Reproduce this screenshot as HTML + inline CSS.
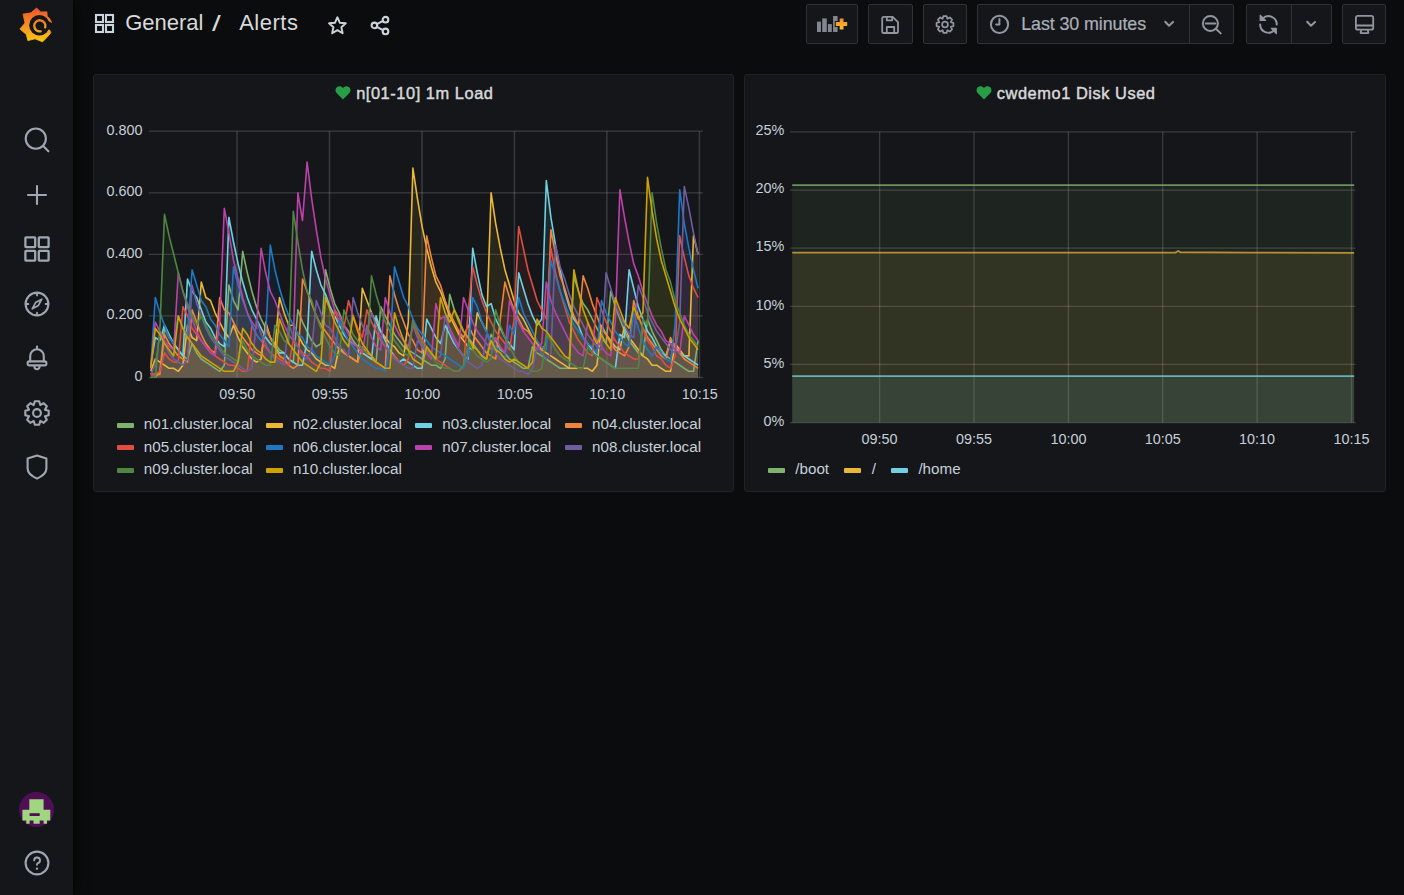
<!DOCTYPE html><html><head><meta charset="utf-8"><style>
html,body{margin:0;padding:0;}
body{width:1404px;height:895px;overflow:hidden;background:#0b0c0e;position:relative;font-family:"Liberation Sans", sans-serif;}
.t{position:absolute;white-space:nowrap;line-height:1;}
#side{position:absolute;left:0;top:0;width:73px;height:895px;background:#141619;box-shadow:0 0 14px rgba(0,0,0,0.9);z-index:0;}
.btn{position:absolute;top:4px;height:38px;background:#141619;border:1px solid #2c3235;border-radius:2px;}
.panel{position:absolute;background:#141619;border:1px solid #202226;border-radius:3px;}
.sw{position:absolute;width:17px;height:5px;border-radius:1px;}
</style></head><body>
<div id="side"><svg style="position:absolute;left:14px;top:2px" width="44" height="46" viewBox="0 0 44 46">
<defs><linearGradient id="lg" gradientUnits="userSpaceOnUse" x1="0" y1="7" x2="0" y2="42"><stop offset="0" stop-color="#f05a28"/><stop offset="0.55" stop-color="#f59a22"/><stop offset="1" stop-color="#fbd00b"/></linearGradient></defs>
<path fill="url(#lg)" stroke="url(#lg)" stroke-width="0.8" stroke-linejoin="round" d="M22.6 5.9 L26.7 10 L32.9 9.8 L33.2 14.2 C35.6 16 37.2 18.6 37.8 21.6 L34.6 22.4 L35.4 27.4 L36.8 30.8 L32.9 35.5 L28.5 39.8 L21 36.8 L13.9 38.6 L12.3 32.4 L5.9 27 L11 21 L9 12.1 L17 10.8 Z"/>
<circle cx="25.4" cy="23.3" r="10.2" fill="#141619"/>
<path fill="#141619" d="M33 18.6 L39 21.4 L39 27.8 L34 27.4 Z"/>
<path fill="none" stroke="url(#lg)" stroke-width="2.3" stroke-linecap="round" d="M26.6 29.4 A5.6 5.6 0 1 1 31.2 25.4"/>
</svg><svg style="position:absolute;left:24.0px;top:127.0px" width="26" height="26" viewBox="0 0 26 26" fill="none" stroke="#9fa7b3" stroke-width="2.1" stroke-linecap="round" stroke-linejoin="round"><circle cx="11.8" cy="11.6" r="10.1"/><path d="M19.2 19 L24.4 24.3"/></svg><svg style="position:absolute;left:24.0px;top:182.0px" width="26" height="26" viewBox="0 0 26 26" fill="none" stroke="#9fa7b3" stroke-width="2.1" stroke-linecap="round" stroke-linejoin="round"><path d="M13 4 V22 M4 13 H22"/></svg><svg style="position:absolute;left:24.0px;top:236.0px" width="26" height="26" viewBox="0 0 26 26" fill="none" stroke="#9fa7b3" stroke-width="2.1" stroke-linecap="round" stroke-linejoin="round"><g stroke-width="2.3"><rect x="1.4" y="1.4" width="9.8" height="9.8" rx="0.6"/><rect x="14.8" y="1.4" width="9.8" height="9.8" rx="0.6"/><rect x="1.4" y="14.8" width="9.8" height="9.8" rx="0.6"/><rect x="14.8" y="14.8" width="9.8" height="9.8" rx="0.6"/></g></svg><svg style="position:absolute;left:24.0px;top:291.0px" width="26" height="26" viewBox="0 0 26 26" fill="none" stroke="#9fa7b3" stroke-width="2.1" stroke-linecap="round" stroke-linejoin="round"><circle cx="13" cy="13" r="11.4"/><path d="M13 2.4 V4.4 M13 21.6 V23.6 M2.4 13 H4.4 M21.6 13 H23.6" stroke-width="1.8"/><path d="M17.8 8.2 L14.4 14.4 L8.2 17.8 L11.6 11.6 Z" stroke-width="1.7"/></svg><svg style="position:absolute;left:24.0px;top:345.0px" width="26" height="26" viewBox="0 0 26 26" fill="none" stroke="#9fa7b3" stroke-width="2.1" stroke-linecap="round" stroke-linejoin="round"><path d="M13 1.6 V3.4"/><path d="M6.2 16.4 V11 A6.8 6.8 0 0 1 19.8 11 V16.4"/><rect x="3.6" y="16.4" width="18.8" height="4" rx="1.6"/><path d="M10.4 21.6 A2.6 2.6 0 0 0 15.6 21.6"/></svg><svg style="position:absolute;left:24.0px;top:400.0px" width="26" height="26" viewBox="0 0 26 26" fill="none" stroke="#9fa7b3" stroke-width="2.1" stroke-linecap="round" stroke-linejoin="round"><path d="M10.77 1.31 L15.23 1.31 L16.29 5.05 L19.69 3.16 L22.84 6.31 L20.95 9.71 L24.69 10.77 L24.69 15.23 L20.95 16.29 L22.84 19.69 L19.69 22.84 L16.29 20.95 L15.23 24.69 L10.77 24.69 L9.71 20.95 L6.31 22.84 L3.16 19.69 L5.05 16.29 L1.31 15.23 L1.31 10.77 L5.05 9.71 L3.16 6.31 L6.31 3.16 L9.71 5.05 Z"/><circle cx="13" cy="13" r="3.9"/></svg><svg style="position:absolute;left:24.0px;top:454.0px" width="26" height="26" viewBox="0 0 26 26" fill="none" stroke="#9fa7b3" stroke-width="2.1" stroke-linecap="round" stroke-linejoin="round"><path d="M13 1.6 L22.4 4.6 V14.6 C22.4 19.4 17.6 22.6 13 24.6 C8.4 22.6 3.6 19.4 3.6 14.6 V4.6 Z"/></svg><svg style="position:absolute;left:19px;top:791.8px" width="35" height="35" viewBox="0 0 35 35">
<circle cx="17.5" cy="17.5" r="17.5" fill="#500e56"/>
<path fill="#a0d680" d="M10.3 7.2 H24.6 V17.8 H31.3 V28.5 H28 V31.8 H24.6 V28.5 H20.7 V31.8 H14.5 V28.5 H10.6 V31.8 H7.3 V28.5 H3.4 V17.8 H10.3 Z"/>
<rect x="10.6" y="21.2" width="10.1" height="2.8" fill="#500e56"/>
</svg><svg style="position:absolute;left:24.0px;top:849.7px" width="26" height="26" viewBox="0 0 26 26" fill="none" stroke="#9fa7b3" stroke-width="2.1" stroke-linecap="round" stroke-linejoin="round"><circle cx="13" cy="13" r="11.4"/><path d="M10.2 10.4 A2.9 2.9 0 1 1 13.8 13.2 C13.2 13.5 13 14 13 14.8" stroke-width="1.9"/><circle cx="13" cy="18.6" r="0.6" fill="#9fa7b3" stroke-width="1.2"/></svg></div>
<svg style="position:absolute;left:94px;top:13px" width="21" height="21" viewBox="0 0 21 21" fill="none" stroke="#ccd3db" stroke-width="2.1">
<rect x="2" y="2" width="7" height="7"/><rect x="12" y="2" width="7" height="7"/><rect x="2" y="12" width="7" height="7"/><rect x="12" y="12" width="7" height="7"/></svg>
<div class="t" style="left:125.20px;top:12.18px;font-size:22px;color:#d8d9da;font-weight:normal;">General</div>
<div class="t" style="left:212.00px;top:12.75px;font-size:22.5px;color:#d8d9da;font-weight:normal;transform:scaleX(1.4);transform-origin:left;">/</div>
<div class="t" style="left:239.20px;top:12.18px;font-size:22px;color:#d8d9da;font-weight:normal;letter-spacing:0.5px;">Alerts</div>
<svg style="position:absolute;left:326px;top:14px" width="23" height="23" viewBox="0 0 23 23" fill="none" stroke="#ccd3db" stroke-width="1.9" stroke-linejoin="round">
<path d="M11.40 3.25 L13.88 8.77 L19.77 9.32 L15.36 13.28 L16.64 19.26 L11.40 16.13 L6.16 19.26 L7.44 13.28 L3.03 9.32 L8.92 8.77 Z"/></svg>
<svg style="position:absolute;left:369px;top:14px" width="23" height="23" viewBox="0 0 23 23" fill="none" stroke="#ccd3db" stroke-width="2.1">
<circle cx="16.5" cy="5.7" r="2.8"/><circle cx="5.4" cy="11.4" r="2.8"/><circle cx="16.5" cy="17.4" r="2.8"/><path d="M7.9 10.1 L14 6.9 M7.9 12.8 L14 16.1"/></svg>
<div class="btn" style="left:806px;width:50px;"></div>
<div class="btn" style="left:868px;width:43px;"></div>
<div class="btn" style="left:923px;width:42px;"></div>
<div class="btn" style="left:977px;width:211px;border-top-right-radius:0;border-bottom-right-radius:0;"></div>
<div class="btn" style="left:1189px;width:43px;border-top-left-radius:0;border-bottom-left-radius:0;"></div>
<div class="btn" style="left:1246px;width:44px;border-top-right-radius:0;border-bottom-right-radius:0;"></div>
<div class="btn" style="left:1291px;width:39px;border-top-left-radius:0;border-bottom-left-radius:0;"></div>
<div class="btn" style="left:1342px;width:42px;"></div>
<svg style="position:absolute;left:812px;top:8px" width="40" height="32" viewBox="812 8 40 32">
<defs><linearGradient id="pg" gradientUnits="userSpaceOnUse" x1="0" y1="18" x2="0" y2="30"><stop offset="0" stop-color="#f5873a"/><stop offset="1" stop-color="#f7c51c"/></linearGradient></defs>
<g fill="#82868d"><rect x="817" y="21.6" width="3.9" height="10.4"/><rect x="822.2" y="18.4" width="4.6" height="13.6"/><rect x="827.9" y="24.1" width="3.9" height="7.9"/><rect x="833.1" y="16" width="4.5" height="16"/></g>
<path fill="#141619" d="M838.7 17.4 H844.5 V21 H848.2 V26.9 H844.5 V30.5 H838.7 V26.9 H834.8 V21 H838.7 Z"/>
<path fill="url(#pg)" d="M839.7 18.4 H843.5 V22 H847.2 V25.9 H843.5 V29.5 H839.7 V25.9 H835.8 V22 H839.7 Z"/>
</svg>
<svg style="position:absolute;left:876px;top:8px" width="32" height="32" viewBox="0 0 32 32" fill="none" stroke="#92979f" stroke-width="1.8" stroke-linecap="round" stroke-linejoin="round"><path d="M7.8 8.8 H16.6 L22 14.2 V23.4 A1.6 1.6 0 0 1 20.4 25 H7.8 A1.6 1.6 0 0 1 6.2 23.4 V10.4 A1.6 1.6 0 0 1 7.8 8.8 Z"/><path d="M10.8 9 V12.4 H16.2 V9"/><path d="M10.8 24.8 V19 H18.2 V24.8"/></svg>
<svg style="position:absolute;left:929px;top:8px" width="32" height="32" viewBox="0 0 32 32" fill="none" stroke="#92979f" stroke-width="1.7" stroke-linecap="round" stroke-linejoin="round"><path d="M14.39 8.05 L17.61 8.05 L18.37 10.77 L20.83 9.39 L23.11 11.67 L21.73 14.13 L24.45 14.89 L24.45 18.11 L21.73 18.87 L23.11 21.33 L20.83 23.61 L18.37 22.23 L17.61 24.95 L14.39 24.95 L13.63 22.23 L11.17 23.61 L8.89 21.33 L10.27 18.87 L7.55 18.11 L7.55 14.89 L10.27 14.13 L8.89 11.67 L11.17 9.39 L13.63 10.77 Z"/><circle cx="16" cy="16.5" r="2.9"/></svg>
<svg style="position:absolute;left:984px;top:8px" width="32" height="32" viewBox="0 0 32 32" fill="none" stroke="#92979f" stroke-width="2" stroke-linecap="round" stroke-linejoin="round"><circle cx="15.5" cy="16.4" r="8.6"/><path d="M15.4 11.1 V16.6 H12.2"/></svg>
<div class="t" style="left:1021.20px;top:16.15px;font-size:17.9px;color:#aab0b8;font-weight:normal;letter-spacing:-0.1px;-webkit-text-stroke:0.2px #aab0b8;">Last 30 minutes</div>
<svg style="position:absolute;left:1155px;top:12px" width="25" height="24" viewBox="0 0 25 24" fill="none" stroke="#92979f" stroke-width="2" stroke-linecap="round" stroke-linejoin="round"><path d="M10.2 9.7 L14 13.7 L18 9.9"/></svg>
<svg style="position:absolute;left:1196px;top:8px" width="32" height="32" viewBox="0 0 32 32" fill="none" stroke="#92979f" stroke-width="2" stroke-linecap="round" stroke-linejoin="round"><circle cx="14.4" cy="15.4" r="7.5"/><path d="M9.8 15.6 H19.3 M20.7 21.5 L24.7 25.4"/></svg>
<svg style="position:absolute;left:1252px;top:8px" width="32" height="32" viewBox="0 0 32 32" fill="none" stroke="#92979f" stroke-width="2" stroke-linecap="round" stroke-linejoin="round"><path d="M10.6 10.6 A8.3 8.3 0 0 1 24.75 16.6"/><path d="M8.15 16.45 A8.3 8.3 0 0 0 22.3 22.3"/><path d="M8.2 7.2 V12.5 H13.6 Z M24.3 25.7 V20.4 H19.3 Z" fill="#92979f" stroke-width="1.2"/></svg>
<svg style="position:absolute;left:1297.4px;top:12px" width="25" height="24" viewBox="0 0 25 24" fill="none" stroke="#92979f" stroke-width="2" stroke-linecap="round" stroke-linejoin="round"><path d="M10.2 9.7 L14 13.7 L18 9.9"/></svg>
<svg style="position:absolute;left:1346px;top:8px" width="36" height="32" viewBox="0 0 36 32" fill="none" stroke="#92979f" stroke-width="1.8" stroke-linecap="round" stroke-linejoin="round"><rect x="9.9" y="7.8" width="17.3" height="13.9" rx="2"/><path d="M10 17.5 H27"/><path d="M15.4 21.8 L14.6 24.6 A0.6 0.6 0 0 0 15.2 25.2 H21.8 A0.6 0.6 0 0 0 22.4 24.6 L21.6 21.8"/></svg>
<div class="panel" style="left:93px;top:74px;width:639px;height:416px"></div>
<div class="panel" style="left:744px;top:74px;width:640px;height:416px"></div>
<svg style="position:absolute;left:334.8px;top:85.8px" width="16" height="14" viewBox="0 0 16 14"><path fill="#299c46" d="M8 13.4 L1.6 7 C0.1 5.4 0.1 2.8 1.8 1.2 C3.6 -0.3 6.4 0.1 8 2.1 C9.6 0.1 12.4 -0.3 14.2 1.2 C15.9 2.8 15.9 5.4 14.4 7 Z"/></svg>
<div class="t" style="left:356.20px;top:84.72px;font-size:16.4px;color:#d8d9da;font-weight:normal;letter-spacing:0.55px;-webkit-text-stroke:0.45px #d8d9da;">n[01-10] 1m Load</div>
<svg style="position:absolute;left:975.6px;top:85.8px" width="16" height="14" viewBox="0 0 16 14"><path fill="#299c46" d="M8 13.4 L1.6 7 C0.1 5.4 0.1 2.8 1.8 1.2 C3.6 -0.3 6.4 0.1 8 2.1 C9.6 0.1 12.4 -0.3 14.2 1.2 C15.9 2.8 15.9 5.4 14.4 7 Z"/></svg>
<div class="t" style="left:996.80px;top:84.72px;font-size:16.4px;color:#d8d9da;font-weight:normal;letter-spacing:0.55px;-webkit-text-stroke:0.45px #d8d9da;">cwdemo1 Disk Used</div>
<svg style="position:absolute;left:0;top:0" width="1404" height="895">
<line x1="148.8" x2="703" y1="377.50" y2="377.50" stroke="rgba(255,255,255,0.155)" stroke-width="1.3"/>
<line x1="148.8" x2="703" y1="315.93" y2="315.93" stroke="rgba(255,255,255,0.155)" stroke-width="1.3"/>
<line x1="148.8" x2="703" y1="254.35" y2="254.35" stroke="rgba(255,255,255,0.155)" stroke-width="1.3"/>
<line x1="148.8" x2="703" y1="192.78" y2="192.78" stroke="rgba(255,255,255,0.155)" stroke-width="1.3"/>
<line x1="148.8" x2="703" y1="131.20" y2="131.20" stroke="rgba(255,255,255,0.155)" stroke-width="1.3"/>
<line x1="237.0" x2="237.0" y1="131.2" y2="377.5" stroke="rgba(255,255,255,0.155)" stroke-width="1.5"/>
<line x1="329.5" x2="329.5" y1="131.2" y2="377.5" stroke="rgba(255,255,255,0.155)" stroke-width="1.5"/>
<line x1="422.0" x2="422.0" y1="131.2" y2="377.5" stroke="rgba(255,255,255,0.155)" stroke-width="1.5"/>
<line x1="514.4" x2="514.4" y1="131.2" y2="377.5" stroke="rgba(255,255,255,0.155)" stroke-width="1.5"/>
<line x1="606.9" x2="606.9" y1="131.2" y2="377.5" stroke="rgba(255,255,255,0.155)" stroke-width="1.5"/>
<line x1="699.4" x2="699.4" y1="131.2" y2="377.5" stroke="rgba(255,255,255,0.155)" stroke-width="1.5"/>
<defs><clipPath id="c1"><rect x="150" y="120" width="552" height="258"/></clipPath></defs><g clip-path="url(#c1)">
<polygon points="150.7,377.5 150.7,377.5 155.3,377.5 159.9,371.3 164.5,328.2 169.1,337.5 173.7,343.6 178.3,349.8 182.9,355.9 187.5,359.0 192.1,343.6 196.7,352.9 201.3,359.0 205.9,362.1 210.5,365.2 215.1,368.3 219.7,371.3 224.3,365.2 228.9,285.1 233.5,300.5 238.1,309.8 242.7,251.3 247.3,272.8 251.9,291.3 256.5,306.7 261.1,319.0 265.7,328.2 270.3,337.5 274.9,343.6 279.5,349.8 284.1,352.9 288.7,359.0 293.3,362.1 297.9,309.8 302.5,322.1 307.1,331.3 311.7,340.6 316.3,346.7 320.9,343.6 325.5,269.7 330.1,288.2 334.7,303.6 339.3,312.8 343.9,325.2 348.5,331.3 353.1,340.6 357.7,346.7 362.3,352.9 366.9,355.9 371.5,359.0 376.1,362.1 380.7,306.7 385.3,315.9 389.9,325.2 394.5,334.4 399.1,340.6 403.7,346.7 408.3,349.8 412.9,352.9 417.5,355.9 422.1,359.0 426.7,362.1 431.3,365.2 435.9,365.2 440.5,368.3 445.1,359.0 449.7,294.4 454.3,309.8 458.9,319.0 463.5,331.3 468.1,337.5 472.7,343.6 477.3,349.8 481.9,355.9 486.5,359.0 491.1,334.4 495.7,340.6 500.3,349.8 504.9,352.9 509.5,359.0 514.1,362.1 518.7,365.2 523.3,368.3 527.9,368.3 532.5,346.7 537.1,352.9 541.7,355.9 546.3,359.0 550.9,362.1 555.5,365.2 560.1,368.3 564.7,368.3 569.3,368.3 573.9,275.9 578.5,291.3 583.1,303.6 587.7,309.8 592.3,319.0 596.9,328.2 601.5,337.5 606.1,343.6 610.7,291.3 615.3,306.7 619.9,319.0 624.5,331.3 629.1,340.6 633.7,346.7 638.3,352.9 642.9,355.9 647.5,319.0 652.1,331.3 656.7,340.6 661.3,349.8 665.9,355.9 670.5,359.0 675.1,362.1 679.7,365.2 684.3,368.3 688.9,371.3 693.5,371.3 698.1,340.6 698.1,377.5" fill="#7EB26D" fill-opacity="0.1"/>
<polygon points="150.7,377.5 150.7,371.3 155.3,359.0 159.9,362.1 164.5,365.2 169.1,368.3 173.7,368.3 178.3,371.3 182.9,365.2 187.5,325.2 192.1,337.5 196.7,340.6 201.3,282.1 205.9,297.5 210.5,300.5 215.1,312.8 219.7,322.1 224.3,331.3 228.9,337.5 233.5,325.2 238.1,337.5 242.7,346.7 247.3,352.9 251.9,359.0 256.5,362.1 261.1,359.0 265.7,322.1 270.3,337.5 274.9,346.7 279.5,297.5 284.1,312.8 288.7,325.2 293.3,325.2 297.9,334.4 302.5,343.6 307.1,349.8 311.7,352.9 316.3,359.0 320.9,362.1 325.5,365.2 330.1,365.2 334.7,368.3 339.3,346.7 343.9,352.9 348.5,355.9 353.1,359.0 357.7,362.1 362.3,288.2 366.9,300.5 371.5,312.8 376.1,322.1 380.7,331.3 385.3,337.5 389.9,343.6 394.5,346.7 399.1,352.9 403.7,355.9 408.3,322.1 412.9,168.1 417.5,198.9 422.1,226.6 426.7,248.2 431.3,266.7 435.9,282.1 440.5,291.3 445.1,303.6 449.7,315.9 454.3,325.2 458.9,334.4 463.5,340.6 468.1,346.7 472.7,349.8 477.3,312.8 481.9,322.1 486.5,331.3 491.1,192.8 495.7,223.6 500.3,248.2 504.9,269.7 509.5,285.1 514.1,300.5 518.7,312.8 523.3,319.0 527.9,328.2 532.5,337.5 537.1,343.6 541.7,349.8 546.3,352.9 550.9,355.9 555.5,359.0 560.1,362.1 564.7,365.2 569.3,368.3 573.9,368.3 578.5,368.3 583.1,368.3 587.7,368.3 592.3,371.3 596.9,365.2 601.5,325.2 606.1,334.4 610.7,340.6 615.3,346.7 619.9,349.8 624.5,325.2 629.1,337.5 633.7,343.6 638.3,349.8 642.9,355.9 647.5,359.0 652.1,365.2 656.7,365.2 661.3,368.3 665.9,371.3 670.5,371.3 675.1,343.6 679.7,349.8 684.3,355.9 688.9,355.9 693.5,235.9 698.1,254.3 698.1,377.5" fill="#EAB839" fill-opacity="0.1"/>
<polygon points="150.7,377.5 150.7,365.2 155.3,337.5 159.9,340.6 164.5,325.2 169.1,334.4 173.7,343.6 178.3,349.8 182.9,355.9 187.5,279.0 192.1,291.3 196.7,297.5 201.3,309.8 205.9,322.1 210.5,328.2 215.1,337.5 219.7,343.6 224.3,346.7 228.9,217.4 233.5,242.0 238.1,263.6 242.7,282.1 247.3,297.5 251.9,309.8 256.5,319.0 261.1,328.2 265.7,337.5 270.3,343.6 274.9,346.7 279.5,352.9 284.1,352.9 288.7,359.0 293.3,362.1 297.9,365.2 302.5,365.2 307.1,340.6 311.7,251.3 316.3,269.7 320.9,285.1 325.5,294.4 330.1,306.7 334.7,315.9 339.3,325.2 343.9,334.4 348.5,340.6 353.1,343.6 357.7,346.7 362.3,352.9 366.9,355.9 371.5,359.0 376.1,315.9 380.7,331.3 385.3,340.6 389.9,349.8 394.5,355.9 399.1,362.1 403.7,359.0 408.3,362.1 412.9,365.2 417.5,368.3 422.1,368.3 426.7,319.0 431.3,328.2 435.9,337.5 440.5,343.6 445.1,325.2 449.7,334.4 454.3,343.6 458.9,349.8 463.5,355.9 468.1,359.0 472.7,248.2 477.3,272.8 481.9,294.4 486.5,306.7 491.1,303.6 495.7,319.0 500.3,328.2 504.9,337.5 509.5,343.6 514.1,349.8 518.7,272.8 523.3,288.2 527.9,303.6 532.5,315.9 537.1,325.2 541.7,319.0 546.3,180.5 550.9,217.4 555.5,245.1 560.1,269.7 564.7,291.3 569.3,306.7 573.9,319.0 578.5,325.2 583.1,337.5 587.7,343.6 592.3,349.8 596.9,355.9 601.5,359.0 606.1,362.1 610.7,365.2 615.3,368.3 619.9,334.4 624.5,337.5 629.1,269.7 633.7,288.2 638.3,306.7 642.9,319.0 647.5,331.3 652.1,337.5 656.7,346.7 661.3,352.9 665.9,355.9 670.5,340.6 675.1,346.7 679.7,352.9 684.3,355.9 688.9,359.0 693.5,362.1 698.1,365.2 698.1,377.5" fill="#6ED0E0" fill-opacity="0.1"/>
<polygon points="150.7,377.5 150.7,374.4 155.3,374.4 159.9,374.4 164.5,334.4 169.1,343.6 173.7,349.8 178.3,355.9 182.9,359.0 187.5,362.1 192.1,309.8 196.7,322.1 201.3,334.4 205.9,343.6 210.5,349.8 215.1,352.9 219.7,297.5 224.3,309.8 228.9,312.8 233.5,322.1 238.1,331.3 242.7,337.5 247.3,343.6 251.9,349.8 256.5,352.9 261.1,355.9 265.7,325.2 270.3,337.5 274.9,346.7 279.5,355.9 284.1,359.0 288.7,365.2 293.3,368.3 297.9,365.2 302.5,279.0 307.1,291.3 311.7,303.6 316.3,315.9 320.9,325.2 325.5,331.3 330.1,337.5 334.7,343.6 339.3,349.8 343.9,352.9 348.5,355.9 353.1,359.0 357.7,362.1 362.3,346.7 366.9,352.9 371.5,355.9 376.1,362.1 380.7,365.2 385.3,368.3 389.9,275.9 394.5,294.4 399.1,309.8 403.7,322.1 408.3,334.4 412.9,340.6 417.5,349.8 422.1,352.9 426.7,235.9 431.3,257.4 435.9,275.9 440.5,285.1 445.1,300.5 449.7,312.8 454.3,322.1 458.9,331.3 463.5,337.5 468.1,325.2 472.7,334.4 477.3,340.6 481.9,346.7 486.5,352.9 491.1,355.9 495.7,359.0 500.3,319.0 504.9,282.1 509.5,297.5 514.1,309.8 518.7,319.0 523.3,328.2 527.9,331.3 532.5,337.5 537.1,343.6 541.7,349.8 546.3,343.6 550.9,229.7 555.5,254.3 560.1,275.9 564.7,288.2 569.3,303.6 573.9,315.9 578.5,325.2 583.1,275.9 587.7,288.2 592.3,303.6 596.9,315.9 601.5,328.2 606.1,334.4 610.7,343.6 615.3,349.8 619.9,352.9 624.5,355.9 629.1,346.7 633.7,300.5 638.3,315.9 642.9,328.2 647.5,337.5 652.1,343.6 656.7,349.8 661.3,355.9 665.9,359.0 670.5,337.5 675.1,346.7 679.7,352.9 684.3,359.0 688.9,362.1 693.5,365.2 698.1,368.3 698.1,377.5" fill="#EF843C" fill-opacity="0.1"/>
<polygon points="150.7,377.5 150.7,374.4 155.3,374.4 159.9,371.3 164.5,352.9 169.1,359.0 173.7,362.1 178.3,362.1 182.9,306.7 187.5,315.9 192.1,328.2 196.7,334.4 201.3,340.6 205.9,346.7 210.5,349.8 215.1,355.9 219.7,359.0 224.3,362.1 228.9,365.2 233.5,365.2 238.1,368.3 242.7,371.3 247.3,371.3 251.9,325.2 256.5,334.4 261.1,340.6 265.7,346.7 270.3,352.9 274.9,355.9 279.5,359.0 284.1,362.1 288.7,365.2 293.3,340.6 297.9,346.7 302.5,352.9 307.1,355.9 311.7,362.1 316.3,365.2 320.9,368.3 325.5,368.3 330.1,371.3 334.7,309.8 339.3,322.1 343.9,328.2 348.5,300.5 353.1,315.9 357.7,328.2 362.3,337.5 366.9,309.8 371.5,322.1 376.1,331.3 380.7,340.6 385.3,346.7 389.9,352.9 394.5,355.9 399.1,362.1 403.7,365.2 408.3,359.0 412.9,319.0 417.5,331.3 422.1,340.6 426.7,346.7 431.3,352.9 435.9,359.0 440.5,362.1 445.1,365.2 449.7,368.3 454.3,371.3 458.9,371.3 463.5,365.2 468.1,312.8 472.7,266.7 477.3,285.1 481.9,300.5 486.5,312.8 491.1,322.1 495.7,331.3 500.3,337.5 504.9,343.6 509.5,349.8 514.1,319.0 518.7,226.6 523.3,248.2 527.9,269.7 532.5,285.1 537.1,300.5 541.7,309.8 546.3,319.0 550.9,248.2 555.5,272.8 560.1,291.3 564.7,306.7 569.3,322.1 573.9,331.3 578.5,340.6 583.1,346.7 587.7,352.9 592.3,355.9 596.9,297.5 601.5,309.8 606.1,322.1 610.7,331.3 615.3,340.6 619.9,346.7 624.5,352.9 629.1,355.9 633.7,359.0 638.3,359.0 642.9,328.2 647.5,340.6 652.1,346.7 656.7,355.9 661.3,359.0 665.9,365.2 670.5,368.3 675.1,355.9 679.7,235.9 684.3,257.4 688.9,275.9 693.5,288.2 698.1,297.5 698.1,377.5" fill="#E24D42" fill-opacity="0.1"/>
<polygon points="150.7,377.5 150.7,368.3 155.3,297.5 159.9,312.8 164.5,325.2 169.1,337.5 173.7,343.6 178.3,315.9 182.9,328.2 187.5,334.4 192.1,269.7 196.7,285.1 201.3,300.5 205.9,306.7 210.5,319.0 215.1,325.2 219.7,334.4 224.3,340.6 228.9,346.7 233.5,266.7 238.1,285.1 242.7,300.5 247.3,312.8 251.9,325.2 256.5,334.4 261.1,340.6 265.7,334.4 270.3,245.1 274.9,269.7 279.5,288.2 284.1,303.6 288.7,315.9 293.3,325.2 297.9,334.4 302.5,337.5 307.1,346.7 311.7,349.8 316.3,355.9 320.9,359.0 325.5,362.1 330.1,365.2 334.7,355.9 339.3,319.0 343.9,331.3 348.5,340.6 353.1,346.7 357.7,352.9 362.3,359.0 366.9,362.1 371.5,365.2 376.1,368.3 380.7,368.3 385.3,371.3 389.9,346.7 394.5,266.7 399.1,282.1 403.7,297.5 408.3,306.7 412.9,319.0 417.5,328.2 422.1,334.4 426.7,340.6 431.3,346.7 435.9,349.8 440.5,352.9 445.1,355.9 449.7,359.0 454.3,362.1 458.9,365.2 463.5,368.3 468.1,355.9 472.7,297.5 477.3,306.7 481.9,322.1 486.5,331.3 491.1,340.6 495.7,346.7 500.3,352.9 504.9,359.0 509.5,325.2 514.1,334.4 518.7,297.5 523.3,312.8 527.9,322.1 532.5,331.3 537.1,340.6 541.7,346.7 546.3,349.8 550.9,260.5 555.5,275.9 560.1,291.3 564.7,303.6 569.3,315.9 573.9,325.2 578.5,331.3 583.1,337.5 587.7,343.6 592.3,346.7 596.9,352.9 601.5,300.5 606.1,312.8 610.7,322.1 615.3,331.3 619.9,337.5 624.5,343.6 629.1,346.7 633.7,312.8 638.3,328.2 642.9,340.6 647.5,349.8 652.1,355.9 656.7,346.7 661.3,352.9 665.9,359.0 670.5,362.1 675.1,325.2 679.7,189.7 684.3,223.6 688.9,248.2 693.5,269.7 698.1,288.2 698.1,377.5" fill="#1F78C1" fill-opacity="0.1"/>
<polygon points="150.7,377.5 150.7,368.3 155.3,322.1 159.9,331.3 164.5,340.6 169.1,346.7 173.7,349.8 178.3,272.8 182.9,291.3 187.5,306.7 192.1,319.0 196.7,331.3 201.3,340.6 205.9,346.7 210.5,352.9 215.1,355.9 219.7,322.1 224.3,208.2 228.9,232.8 233.5,260.5 238.1,279.0 242.7,297.5 247.3,312.8 251.9,322.1 256.5,328.2 261.1,248.2 265.7,272.8 270.3,291.3 274.9,300.5 279.5,312.8 284.1,325.2 288.7,334.4 293.3,340.6 297.9,192.8 302.5,220.5 307.1,162.0 311.7,198.9 316.3,229.7 320.9,257.4 325.5,279.0 330.1,294.4 334.7,309.8 339.3,315.9 343.9,325.2 348.5,334.4 353.1,343.6 357.7,346.7 362.3,352.9 366.9,325.2 371.5,337.5 376.1,346.7 380.7,349.8 385.3,297.5 389.9,312.8 394.5,325.2 399.1,334.4 403.7,340.6 408.3,346.7 412.9,325.2 417.5,337.5 422.1,346.7 426.7,352.9 431.3,359.0 435.9,303.6 440.5,319.0 445.1,315.9 449.7,328.2 454.3,337.5 458.9,346.7 463.5,297.5 468.1,309.8 472.7,322.1 477.3,331.3 481.9,337.5 486.5,343.6 491.1,349.8 495.7,337.5 500.3,346.7 504.9,352.9 509.5,300.5 514.1,312.8 518.7,322.1 523.3,331.3 527.9,337.5 532.5,343.6 537.1,349.8 541.7,343.6 546.3,282.1 550.9,300.5 555.5,312.8 560.1,322.1 564.7,331.3 569.3,340.6 573.9,346.7 578.5,352.9 583.1,355.9 587.7,322.1 592.3,331.3 596.9,340.6 601.5,346.7 606.1,352.9 610.7,355.9 615.3,322.1 619.9,189.7 624.5,217.4 629.1,242.0 633.7,263.6 638.3,275.9 642.9,291.3 647.5,303.6 652.1,315.9 656.7,325.2 661.3,331.3 665.9,340.6 670.5,343.6 675.1,349.8 679.7,352.9 684.3,315.9 688.9,325.2 693.5,334.4 698.1,340.6 698.1,377.5" fill="#BA43A9" fill-opacity="0.1"/>
<polygon points="150.7,377.5 150.7,374.4 155.3,365.2 159.9,334.4 164.5,343.6 169.1,352.9 173.7,359.0 178.3,362.1 182.9,365.2 187.5,359.0 192.1,285.1 196.7,303.6 201.3,315.9 205.9,328.2 210.5,337.5 215.1,343.6 219.7,349.8 224.3,355.9 228.9,359.0 233.5,362.1 238.1,365.2 242.7,368.3 247.3,371.3 251.9,368.3 256.5,319.0 261.1,334.4 265.7,343.6 270.3,352.9 274.9,359.0 279.5,362.1 284.1,365.2 288.7,322.1 293.3,337.5 297.9,346.7 302.5,355.9 307.1,359.0 311.7,349.8 316.3,300.5 320.9,312.8 325.5,325.2 330.1,328.2 334.7,337.5 339.3,346.7 343.9,349.8 348.5,355.9 353.1,297.5 357.7,312.8 362.3,325.2 366.9,334.4 371.5,312.8 376.1,325.2 380.7,337.5 385.3,346.7 389.9,352.9 394.5,359.0 399.1,362.1 403.7,365.2 408.3,368.3 412.9,368.3 417.5,340.6 422.1,346.7 426.7,349.8 431.3,355.9 435.9,359.0 440.5,355.9 445.1,315.9 449.7,331.3 454.3,340.6 458.9,349.8 463.5,355.9 468.1,362.1 472.7,365.2 477.3,368.3 481.9,365.2 486.5,334.4 491.1,343.6 495.7,352.9 500.3,359.0 504.9,362.1 509.5,365.2 514.1,368.3 518.7,371.3 523.3,371.3 527.9,374.4 532.5,368.3 537.1,346.7 541.7,352.9 546.3,359.0 550.9,352.9 555.5,245.1 560.1,266.7 564.7,279.0 569.3,294.4 573.9,306.7 578.5,315.9 583.1,325.2 587.7,334.4 592.3,340.6 596.9,346.7 601.5,349.8 606.1,272.8 610.7,288.2 615.3,303.6 619.9,315.9 624.5,325.2 629.1,334.4 633.7,337.5 638.3,285.1 642.9,297.5 647.5,312.8 652.1,322.1 656.7,331.3 661.3,337.5 665.9,343.6 670.5,349.8 675.1,352.9 679.7,322.1 684.3,186.6 688.9,208.2 693.5,232.8 698.1,254.3 698.1,377.5" fill="#705DA0" fill-opacity="0.1"/>
<polygon points="150.7,377.5 150.7,377.5 155.3,377.5 159.9,328.2 164.5,214.3 169.1,235.9 173.7,254.3 178.3,272.8 182.9,291.3 187.5,303.6 192.1,315.9 196.7,325.2 201.3,315.9 205.9,325.2 210.5,334.4 215.1,340.6 219.7,346.7 224.3,352.9 228.9,355.9 233.5,359.0 238.1,362.1 242.7,340.6 247.3,349.8 251.9,355.9 256.5,359.0 261.1,362.1 265.7,365.2 270.3,365.2 274.9,325.2 279.5,331.3 284.1,340.6 288.7,343.6 293.3,211.2 297.9,242.0 302.5,269.7 307.1,291.3 311.7,300.5 316.3,315.9 320.9,328.2 325.5,337.5 330.1,346.7 334.7,352.9 339.3,355.9 343.9,309.8 348.5,322.1 353.1,334.4 357.7,340.6 362.3,349.8 366.9,352.9 371.5,275.9 376.1,294.4 380.7,309.8 385.3,322.1 389.9,331.3 394.5,340.6 399.1,346.7 403.7,352.9 408.3,355.9 412.9,322.1 417.5,334.4 422.1,343.6 426.7,349.8 431.3,355.9 435.9,362.1 440.5,365.2 445.1,368.3 449.7,368.3 454.3,371.3 458.9,371.3 463.5,365.2 468.1,343.6 472.7,349.8 477.3,355.9 481.9,359.0 486.5,362.1 491.1,359.0 495.7,309.8 500.3,325.2 504.9,337.5 509.5,346.7 514.1,355.9 518.7,362.1 523.3,365.2 527.9,368.3 532.5,371.3 537.1,371.3 541.7,368.3 546.3,334.4 550.9,340.6 555.5,349.8 560.1,355.9 564.7,359.0 569.3,362.1 573.9,365.2 578.5,368.3 583.1,368.3 587.7,346.7 592.3,352.9 596.9,355.9 601.5,359.0 606.1,362.1 610.7,365.2 615.3,368.3 619.9,368.3 624.5,368.3 629.1,368.3 633.7,368.3 638.3,368.3 642.9,319.0 647.5,325.2 652.1,192.8 656.7,223.6 661.3,248.2 665.9,269.7 670.5,282.1 675.1,300.5 679.7,312.8 684.3,325.2 688.9,334.4 693.5,340.6 698.1,346.7 698.1,377.5" fill="#508642" fill-opacity="0.1"/>
<polygon points="150.7,377.5 150.7,368.3 155.3,328.2 159.9,334.4 164.5,343.6 169.1,349.8 173.7,355.9 178.3,315.9 182.9,328.2 187.5,337.5 192.1,343.6 196.7,349.8 201.3,355.9 205.9,359.0 210.5,362.1 215.1,365.2 219.7,368.3 224.3,371.3 228.9,371.3 233.5,371.3 238.1,362.1 242.7,328.2 247.3,334.4 251.9,343.6 256.5,349.8 261.1,352.9 265.7,359.0 270.3,362.1 274.9,362.1 279.5,319.0 284.1,331.3 288.7,343.6 293.3,349.8 297.9,355.9 302.5,362.1 307.1,365.2 311.7,368.3 316.3,371.3 320.9,362.1 325.5,297.5 330.1,309.8 334.7,322.1 339.3,331.3 343.9,340.6 348.5,346.7 353.1,315.9 357.7,331.3 362.3,343.6 366.9,349.8 371.5,355.9 376.1,362.1 380.7,365.2 385.3,368.3 389.9,368.3 394.5,312.8 399.1,328.2 403.7,340.6 408.3,349.8 412.9,359.0 417.5,362.1 422.1,365.2 426.7,346.7 431.3,352.9 435.9,359.0 440.5,297.5 445.1,312.8 449.7,322.1 454.3,309.8 458.9,322.1 463.5,331.3 468.1,337.5 472.7,346.7 477.3,349.8 481.9,355.9 486.5,359.0 491.1,340.6 495.7,349.8 500.3,352.9 504.9,359.0 509.5,362.1 514.1,359.0 518.7,362.1 523.3,365.2 527.9,368.3 532.5,362.1 537.1,319.0 541.7,328.2 546.3,331.3 550.9,337.5 555.5,343.6 560.1,349.8 564.7,355.9 569.3,359.0 573.9,269.7 578.5,291.3 583.1,309.8 587.7,322.1 592.3,334.4 596.9,343.6 601.5,334.4 606.1,343.6 610.7,349.8 615.3,297.5 619.9,309.8 624.5,322.1 629.1,328.2 633.7,306.7 638.3,319.0 642.9,312.8 647.5,177.4 652.1,211.2 656.7,239.0 661.3,260.5 665.9,275.9 670.5,291.3 675.1,306.7 679.7,319.0 684.3,328.2 688.9,337.5 693.5,343.6 698.1,349.8 698.1,377.5" fill="#CCA300" fill-opacity="0.1"/>
<polyline points="150.7,377.5 155.3,377.5 159.9,371.3 164.5,328.2 169.1,337.5 173.7,343.6 178.3,349.8 182.9,355.9 187.5,359.0 192.1,343.6 196.7,352.9 201.3,359.0 205.9,362.1 210.5,365.2 215.1,368.3 219.7,371.3 224.3,365.2 228.9,285.1 233.5,300.5 238.1,309.8 242.7,251.3 247.3,272.8 251.9,291.3 256.5,306.7 261.1,319.0 265.7,328.2 270.3,337.5 274.9,343.6 279.5,349.8 284.1,352.9 288.7,359.0 293.3,362.1 297.9,309.8 302.5,322.1 307.1,331.3 311.7,340.6 316.3,346.7 320.9,343.6 325.5,269.7 330.1,288.2 334.7,303.6 339.3,312.8 343.9,325.2 348.5,331.3 353.1,340.6 357.7,346.7 362.3,352.9 366.9,355.9 371.5,359.0 376.1,362.1 380.7,306.7 385.3,315.9 389.9,325.2 394.5,334.4 399.1,340.6 403.7,346.7 408.3,349.8 412.9,352.9 417.5,355.9 422.1,359.0 426.7,362.1 431.3,365.2 435.9,365.2 440.5,368.3 445.1,359.0 449.7,294.4 454.3,309.8 458.9,319.0 463.5,331.3 468.1,337.5 472.7,343.6 477.3,349.8 481.9,355.9 486.5,359.0 491.1,334.4 495.7,340.6 500.3,349.8 504.9,352.9 509.5,359.0 514.1,362.1 518.7,365.2 523.3,368.3 527.9,368.3 532.5,346.7 537.1,352.9 541.7,355.9 546.3,359.0 550.9,362.1 555.5,365.2 560.1,368.3 564.7,368.3 569.3,368.3 573.9,275.9 578.5,291.3 583.1,303.6 587.7,309.8 592.3,319.0 596.9,328.2 601.5,337.5 606.1,343.6 610.7,291.3 615.3,306.7 619.9,319.0 624.5,331.3 629.1,340.6 633.7,346.7 638.3,352.9 642.9,355.9 647.5,319.0 652.1,331.3 656.7,340.6 661.3,349.8 665.9,355.9 670.5,359.0 675.1,362.1 679.7,365.2 684.3,368.3 688.9,371.3 693.5,371.3 698.1,340.6" fill="none" stroke="#7EB26D" stroke-width="1.6" stroke-linejoin="round"/>
<polyline points="150.7,371.3 155.3,359.0 159.9,362.1 164.5,365.2 169.1,368.3 173.7,368.3 178.3,371.3 182.9,365.2 187.5,325.2 192.1,337.5 196.7,340.6 201.3,282.1 205.9,297.5 210.5,300.5 215.1,312.8 219.7,322.1 224.3,331.3 228.9,337.5 233.5,325.2 238.1,337.5 242.7,346.7 247.3,352.9 251.9,359.0 256.5,362.1 261.1,359.0 265.7,322.1 270.3,337.5 274.9,346.7 279.5,297.5 284.1,312.8 288.7,325.2 293.3,325.2 297.9,334.4 302.5,343.6 307.1,349.8 311.7,352.9 316.3,359.0 320.9,362.1 325.5,365.2 330.1,365.2 334.7,368.3 339.3,346.7 343.9,352.9 348.5,355.9 353.1,359.0 357.7,362.1 362.3,288.2 366.9,300.5 371.5,312.8 376.1,322.1 380.7,331.3 385.3,337.5 389.9,343.6 394.5,346.7 399.1,352.9 403.7,355.9 408.3,322.1 412.9,168.1 417.5,198.9 422.1,226.6 426.7,248.2 431.3,266.7 435.9,282.1 440.5,291.3 445.1,303.6 449.7,315.9 454.3,325.2 458.9,334.4 463.5,340.6 468.1,346.7 472.7,349.8 477.3,312.8 481.9,322.1 486.5,331.3 491.1,192.8 495.7,223.6 500.3,248.2 504.9,269.7 509.5,285.1 514.1,300.5 518.7,312.8 523.3,319.0 527.9,328.2 532.5,337.5 537.1,343.6 541.7,349.8 546.3,352.9 550.9,355.9 555.5,359.0 560.1,362.1 564.7,365.2 569.3,368.3 573.9,368.3 578.5,368.3 583.1,368.3 587.7,368.3 592.3,371.3 596.9,365.2 601.5,325.2 606.1,334.4 610.7,340.6 615.3,346.7 619.9,349.8 624.5,325.2 629.1,337.5 633.7,343.6 638.3,349.8 642.9,355.9 647.5,359.0 652.1,365.2 656.7,365.2 661.3,368.3 665.9,371.3 670.5,371.3 675.1,343.6 679.7,349.8 684.3,355.9 688.9,355.9 693.5,235.9 698.1,254.3" fill="none" stroke="#EAB839" stroke-width="1.6" stroke-linejoin="round"/>
<polyline points="150.7,365.2 155.3,337.5 159.9,340.6 164.5,325.2 169.1,334.4 173.7,343.6 178.3,349.8 182.9,355.9 187.5,279.0 192.1,291.3 196.7,297.5 201.3,309.8 205.9,322.1 210.5,328.2 215.1,337.5 219.7,343.6 224.3,346.7 228.9,217.4 233.5,242.0 238.1,263.6 242.7,282.1 247.3,297.5 251.9,309.8 256.5,319.0 261.1,328.2 265.7,337.5 270.3,343.6 274.9,346.7 279.5,352.9 284.1,352.9 288.7,359.0 293.3,362.1 297.9,365.2 302.5,365.2 307.1,340.6 311.7,251.3 316.3,269.7 320.9,285.1 325.5,294.4 330.1,306.7 334.7,315.9 339.3,325.2 343.9,334.4 348.5,340.6 353.1,343.6 357.7,346.7 362.3,352.9 366.9,355.9 371.5,359.0 376.1,315.9 380.7,331.3 385.3,340.6 389.9,349.8 394.5,355.9 399.1,362.1 403.7,359.0 408.3,362.1 412.9,365.2 417.5,368.3 422.1,368.3 426.7,319.0 431.3,328.2 435.9,337.5 440.5,343.6 445.1,325.2 449.7,334.4 454.3,343.6 458.9,349.8 463.5,355.9 468.1,359.0 472.7,248.2 477.3,272.8 481.9,294.4 486.5,306.7 491.1,303.6 495.7,319.0 500.3,328.2 504.9,337.5 509.5,343.6 514.1,349.8 518.7,272.8 523.3,288.2 527.9,303.6 532.5,315.9 537.1,325.2 541.7,319.0 546.3,180.5 550.9,217.4 555.5,245.1 560.1,269.7 564.7,291.3 569.3,306.7 573.9,319.0 578.5,325.2 583.1,337.5 587.7,343.6 592.3,349.8 596.9,355.9 601.5,359.0 606.1,362.1 610.7,365.2 615.3,368.3 619.9,334.4 624.5,337.5 629.1,269.7 633.7,288.2 638.3,306.7 642.9,319.0 647.5,331.3 652.1,337.5 656.7,346.7 661.3,352.9 665.9,355.9 670.5,340.6 675.1,346.7 679.7,352.9 684.3,355.9 688.9,359.0 693.5,362.1 698.1,365.2" fill="none" stroke="#6ED0E0" stroke-width="1.6" stroke-linejoin="round"/>
<polyline points="150.7,374.4 155.3,374.4 159.9,374.4 164.5,334.4 169.1,343.6 173.7,349.8 178.3,355.9 182.9,359.0 187.5,362.1 192.1,309.8 196.7,322.1 201.3,334.4 205.9,343.6 210.5,349.8 215.1,352.9 219.7,297.5 224.3,309.8 228.9,312.8 233.5,322.1 238.1,331.3 242.7,337.5 247.3,343.6 251.9,349.8 256.5,352.9 261.1,355.9 265.7,325.2 270.3,337.5 274.9,346.7 279.5,355.9 284.1,359.0 288.7,365.2 293.3,368.3 297.9,365.2 302.5,279.0 307.1,291.3 311.7,303.6 316.3,315.9 320.9,325.2 325.5,331.3 330.1,337.5 334.7,343.6 339.3,349.8 343.9,352.9 348.5,355.9 353.1,359.0 357.7,362.1 362.3,346.7 366.9,352.9 371.5,355.9 376.1,362.1 380.7,365.2 385.3,368.3 389.9,275.9 394.5,294.4 399.1,309.8 403.7,322.1 408.3,334.4 412.9,340.6 417.5,349.8 422.1,352.9 426.7,235.9 431.3,257.4 435.9,275.9 440.5,285.1 445.1,300.5 449.7,312.8 454.3,322.1 458.9,331.3 463.5,337.5 468.1,325.2 472.7,334.4 477.3,340.6 481.9,346.7 486.5,352.9 491.1,355.9 495.7,359.0 500.3,319.0 504.9,282.1 509.5,297.5 514.1,309.8 518.7,319.0 523.3,328.2 527.9,331.3 532.5,337.5 537.1,343.6 541.7,349.8 546.3,343.6 550.9,229.7 555.5,254.3 560.1,275.9 564.7,288.2 569.3,303.6 573.9,315.9 578.5,325.2 583.1,275.9 587.7,288.2 592.3,303.6 596.9,315.9 601.5,328.2 606.1,334.4 610.7,343.6 615.3,349.8 619.9,352.9 624.5,355.9 629.1,346.7 633.7,300.5 638.3,315.9 642.9,328.2 647.5,337.5 652.1,343.6 656.7,349.8 661.3,355.9 665.9,359.0 670.5,337.5 675.1,346.7 679.7,352.9 684.3,359.0 688.9,362.1 693.5,365.2 698.1,368.3" fill="none" stroke="#EF843C" stroke-width="1.6" stroke-linejoin="round"/>
<polyline points="150.7,374.4 155.3,374.4 159.9,371.3 164.5,352.9 169.1,359.0 173.7,362.1 178.3,362.1 182.9,306.7 187.5,315.9 192.1,328.2 196.7,334.4 201.3,340.6 205.9,346.7 210.5,349.8 215.1,355.9 219.7,359.0 224.3,362.1 228.9,365.2 233.5,365.2 238.1,368.3 242.7,371.3 247.3,371.3 251.9,325.2 256.5,334.4 261.1,340.6 265.7,346.7 270.3,352.9 274.9,355.9 279.5,359.0 284.1,362.1 288.7,365.2 293.3,340.6 297.9,346.7 302.5,352.9 307.1,355.9 311.7,362.1 316.3,365.2 320.9,368.3 325.5,368.3 330.1,371.3 334.7,309.8 339.3,322.1 343.9,328.2 348.5,300.5 353.1,315.9 357.7,328.2 362.3,337.5 366.9,309.8 371.5,322.1 376.1,331.3 380.7,340.6 385.3,346.7 389.9,352.9 394.5,355.9 399.1,362.1 403.7,365.2 408.3,359.0 412.9,319.0 417.5,331.3 422.1,340.6 426.7,346.7 431.3,352.9 435.9,359.0 440.5,362.1 445.1,365.2 449.7,368.3 454.3,371.3 458.9,371.3 463.5,365.2 468.1,312.8 472.7,266.7 477.3,285.1 481.9,300.5 486.5,312.8 491.1,322.1 495.7,331.3 500.3,337.5 504.9,343.6 509.5,349.8 514.1,319.0 518.7,226.6 523.3,248.2 527.9,269.7 532.5,285.1 537.1,300.5 541.7,309.8 546.3,319.0 550.9,248.2 555.5,272.8 560.1,291.3 564.7,306.7 569.3,322.1 573.9,331.3 578.5,340.6 583.1,346.7 587.7,352.9 592.3,355.9 596.9,297.5 601.5,309.8 606.1,322.1 610.7,331.3 615.3,340.6 619.9,346.7 624.5,352.9 629.1,355.9 633.7,359.0 638.3,359.0 642.9,328.2 647.5,340.6 652.1,346.7 656.7,355.9 661.3,359.0 665.9,365.2 670.5,368.3 675.1,355.9 679.7,235.9 684.3,257.4 688.9,275.9 693.5,288.2 698.1,297.5" fill="none" stroke="#E24D42" stroke-width="1.6" stroke-linejoin="round"/>
<polyline points="150.7,368.3 155.3,297.5 159.9,312.8 164.5,325.2 169.1,337.5 173.7,343.6 178.3,315.9 182.9,328.2 187.5,334.4 192.1,269.7 196.7,285.1 201.3,300.5 205.9,306.7 210.5,319.0 215.1,325.2 219.7,334.4 224.3,340.6 228.9,346.7 233.5,266.7 238.1,285.1 242.7,300.5 247.3,312.8 251.9,325.2 256.5,334.4 261.1,340.6 265.7,334.4 270.3,245.1 274.9,269.7 279.5,288.2 284.1,303.6 288.7,315.9 293.3,325.2 297.9,334.4 302.5,337.5 307.1,346.7 311.7,349.8 316.3,355.9 320.9,359.0 325.5,362.1 330.1,365.2 334.7,355.9 339.3,319.0 343.9,331.3 348.5,340.6 353.1,346.7 357.7,352.9 362.3,359.0 366.9,362.1 371.5,365.2 376.1,368.3 380.7,368.3 385.3,371.3 389.9,346.7 394.5,266.7 399.1,282.1 403.7,297.5 408.3,306.7 412.9,319.0 417.5,328.2 422.1,334.4 426.7,340.6 431.3,346.7 435.9,349.8 440.5,352.9 445.1,355.9 449.7,359.0 454.3,362.1 458.9,365.2 463.5,368.3 468.1,355.9 472.7,297.5 477.3,306.7 481.9,322.1 486.5,331.3 491.1,340.6 495.7,346.7 500.3,352.9 504.9,359.0 509.5,325.2 514.1,334.4 518.7,297.5 523.3,312.8 527.9,322.1 532.5,331.3 537.1,340.6 541.7,346.7 546.3,349.8 550.9,260.5 555.5,275.9 560.1,291.3 564.7,303.6 569.3,315.9 573.9,325.2 578.5,331.3 583.1,337.5 587.7,343.6 592.3,346.7 596.9,352.9 601.5,300.5 606.1,312.8 610.7,322.1 615.3,331.3 619.9,337.5 624.5,343.6 629.1,346.7 633.7,312.8 638.3,328.2 642.9,340.6 647.5,349.8 652.1,355.9 656.7,346.7 661.3,352.9 665.9,359.0 670.5,362.1 675.1,325.2 679.7,189.7 684.3,223.6 688.9,248.2 693.5,269.7 698.1,288.2" fill="none" stroke="#1F78C1" stroke-width="1.6" stroke-linejoin="round"/>
<polyline points="150.7,368.3 155.3,322.1 159.9,331.3 164.5,340.6 169.1,346.7 173.7,349.8 178.3,272.8 182.9,291.3 187.5,306.7 192.1,319.0 196.7,331.3 201.3,340.6 205.9,346.7 210.5,352.9 215.1,355.9 219.7,322.1 224.3,208.2 228.9,232.8 233.5,260.5 238.1,279.0 242.7,297.5 247.3,312.8 251.9,322.1 256.5,328.2 261.1,248.2 265.7,272.8 270.3,291.3 274.9,300.5 279.5,312.8 284.1,325.2 288.7,334.4 293.3,340.6 297.9,192.8 302.5,220.5 307.1,162.0 311.7,198.9 316.3,229.7 320.9,257.4 325.5,279.0 330.1,294.4 334.7,309.8 339.3,315.9 343.9,325.2 348.5,334.4 353.1,343.6 357.7,346.7 362.3,352.9 366.9,325.2 371.5,337.5 376.1,346.7 380.7,349.8 385.3,297.5 389.9,312.8 394.5,325.2 399.1,334.4 403.7,340.6 408.3,346.7 412.9,325.2 417.5,337.5 422.1,346.7 426.7,352.9 431.3,359.0 435.9,303.6 440.5,319.0 445.1,315.9 449.7,328.2 454.3,337.5 458.9,346.7 463.5,297.5 468.1,309.8 472.7,322.1 477.3,331.3 481.9,337.5 486.5,343.6 491.1,349.8 495.7,337.5 500.3,346.7 504.9,352.9 509.5,300.5 514.1,312.8 518.7,322.1 523.3,331.3 527.9,337.5 532.5,343.6 537.1,349.8 541.7,343.6 546.3,282.1 550.9,300.5 555.5,312.8 560.1,322.1 564.7,331.3 569.3,340.6 573.9,346.7 578.5,352.9 583.1,355.9 587.7,322.1 592.3,331.3 596.9,340.6 601.5,346.7 606.1,352.9 610.7,355.9 615.3,322.1 619.9,189.7 624.5,217.4 629.1,242.0 633.7,263.6 638.3,275.9 642.9,291.3 647.5,303.6 652.1,315.9 656.7,325.2 661.3,331.3 665.9,340.6 670.5,343.6 675.1,349.8 679.7,352.9 684.3,315.9 688.9,325.2 693.5,334.4 698.1,340.6" fill="none" stroke="#BA43A9" stroke-width="1.6" stroke-linejoin="round"/>
<polyline points="150.7,374.4 155.3,365.2 159.9,334.4 164.5,343.6 169.1,352.9 173.7,359.0 178.3,362.1 182.9,365.2 187.5,359.0 192.1,285.1 196.7,303.6 201.3,315.9 205.9,328.2 210.5,337.5 215.1,343.6 219.7,349.8 224.3,355.9 228.9,359.0 233.5,362.1 238.1,365.2 242.7,368.3 247.3,371.3 251.9,368.3 256.5,319.0 261.1,334.4 265.7,343.6 270.3,352.9 274.9,359.0 279.5,362.1 284.1,365.2 288.7,322.1 293.3,337.5 297.9,346.7 302.5,355.9 307.1,359.0 311.7,349.8 316.3,300.5 320.9,312.8 325.5,325.2 330.1,328.2 334.7,337.5 339.3,346.7 343.9,349.8 348.5,355.9 353.1,297.5 357.7,312.8 362.3,325.2 366.9,334.4 371.5,312.8 376.1,325.2 380.7,337.5 385.3,346.7 389.9,352.9 394.5,359.0 399.1,362.1 403.7,365.2 408.3,368.3 412.9,368.3 417.5,340.6 422.1,346.7 426.7,349.8 431.3,355.9 435.9,359.0 440.5,355.9 445.1,315.9 449.7,331.3 454.3,340.6 458.9,349.8 463.5,355.9 468.1,362.1 472.7,365.2 477.3,368.3 481.9,365.2 486.5,334.4 491.1,343.6 495.7,352.9 500.3,359.0 504.9,362.1 509.5,365.2 514.1,368.3 518.7,371.3 523.3,371.3 527.9,374.4 532.5,368.3 537.1,346.7 541.7,352.9 546.3,359.0 550.9,352.9 555.5,245.1 560.1,266.7 564.7,279.0 569.3,294.4 573.9,306.7 578.5,315.9 583.1,325.2 587.7,334.4 592.3,340.6 596.9,346.7 601.5,349.8 606.1,272.8 610.7,288.2 615.3,303.6 619.9,315.9 624.5,325.2 629.1,334.4 633.7,337.5 638.3,285.1 642.9,297.5 647.5,312.8 652.1,322.1 656.7,331.3 661.3,337.5 665.9,343.6 670.5,349.8 675.1,352.9 679.7,322.1 684.3,186.6 688.9,208.2 693.5,232.8 698.1,254.3" fill="none" stroke="#705DA0" stroke-width="1.6" stroke-linejoin="round"/>
<polyline points="150.7,377.5 155.3,377.5 159.9,328.2 164.5,214.3 169.1,235.9 173.7,254.3 178.3,272.8 182.9,291.3 187.5,303.6 192.1,315.9 196.7,325.2 201.3,315.9 205.9,325.2 210.5,334.4 215.1,340.6 219.7,346.7 224.3,352.9 228.9,355.9 233.5,359.0 238.1,362.1 242.7,340.6 247.3,349.8 251.9,355.9 256.5,359.0 261.1,362.1 265.7,365.2 270.3,365.2 274.9,325.2 279.5,331.3 284.1,340.6 288.7,343.6 293.3,211.2 297.9,242.0 302.5,269.7 307.1,291.3 311.7,300.5 316.3,315.9 320.9,328.2 325.5,337.5 330.1,346.7 334.7,352.9 339.3,355.9 343.9,309.8 348.5,322.1 353.1,334.4 357.7,340.6 362.3,349.8 366.9,352.9 371.5,275.9 376.1,294.4 380.7,309.8 385.3,322.1 389.9,331.3 394.5,340.6 399.1,346.7 403.7,352.9 408.3,355.9 412.9,322.1 417.5,334.4 422.1,343.6 426.7,349.8 431.3,355.9 435.9,362.1 440.5,365.2 445.1,368.3 449.7,368.3 454.3,371.3 458.9,371.3 463.5,365.2 468.1,343.6 472.7,349.8 477.3,355.9 481.9,359.0 486.5,362.1 491.1,359.0 495.7,309.8 500.3,325.2 504.9,337.5 509.5,346.7 514.1,355.9 518.7,362.1 523.3,365.2 527.9,368.3 532.5,371.3 537.1,371.3 541.7,368.3 546.3,334.4 550.9,340.6 555.5,349.8 560.1,355.9 564.7,359.0 569.3,362.1 573.9,365.2 578.5,368.3 583.1,368.3 587.7,346.7 592.3,352.9 596.9,355.9 601.5,359.0 606.1,362.1 610.7,365.2 615.3,368.3 619.9,368.3 624.5,368.3 629.1,368.3 633.7,368.3 638.3,368.3 642.9,319.0 647.5,325.2 652.1,192.8 656.7,223.6 661.3,248.2 665.9,269.7 670.5,282.1 675.1,300.5 679.7,312.8 684.3,325.2 688.9,334.4 693.5,340.6 698.1,346.7" fill="none" stroke="#508642" stroke-width="1.6" stroke-linejoin="round"/>
<polyline points="150.7,368.3 155.3,328.2 159.9,334.4 164.5,343.6 169.1,349.8 173.7,355.9 178.3,315.9 182.9,328.2 187.5,337.5 192.1,343.6 196.7,349.8 201.3,355.9 205.9,359.0 210.5,362.1 215.1,365.2 219.7,368.3 224.3,371.3 228.9,371.3 233.5,371.3 238.1,362.1 242.7,328.2 247.3,334.4 251.9,343.6 256.5,349.8 261.1,352.9 265.7,359.0 270.3,362.1 274.9,362.1 279.5,319.0 284.1,331.3 288.7,343.6 293.3,349.8 297.9,355.9 302.5,362.1 307.1,365.2 311.7,368.3 316.3,371.3 320.9,362.1 325.5,297.5 330.1,309.8 334.7,322.1 339.3,331.3 343.9,340.6 348.5,346.7 353.1,315.9 357.7,331.3 362.3,343.6 366.9,349.8 371.5,355.9 376.1,362.1 380.7,365.2 385.3,368.3 389.9,368.3 394.5,312.8 399.1,328.2 403.7,340.6 408.3,349.8 412.9,359.0 417.5,362.1 422.1,365.2 426.7,346.7 431.3,352.9 435.9,359.0 440.5,297.5 445.1,312.8 449.7,322.1 454.3,309.8 458.9,322.1 463.5,331.3 468.1,337.5 472.7,346.7 477.3,349.8 481.9,355.9 486.5,359.0 491.1,340.6 495.7,349.8 500.3,352.9 504.9,359.0 509.5,362.1 514.1,359.0 518.7,362.1 523.3,365.2 527.9,368.3 532.5,362.1 537.1,319.0 541.7,328.2 546.3,331.3 550.9,337.5 555.5,343.6 560.1,349.8 564.7,355.9 569.3,359.0 573.9,269.7 578.5,291.3 583.1,309.8 587.7,322.1 592.3,334.4 596.9,343.6 601.5,334.4 606.1,343.6 610.7,349.8 615.3,297.5 619.9,309.8 624.5,322.1 629.1,328.2 633.7,306.7 638.3,319.0 642.9,312.8 647.5,177.4 652.1,211.2 656.7,239.0 661.3,260.5 665.9,275.9 670.5,291.3 675.1,306.7 679.7,319.0 684.3,328.2 688.9,337.5 693.5,343.6 698.1,349.8" fill="none" stroke="#CCA300" stroke-width="1.6" stroke-linejoin="round"/>
</g></svg>
<div class="t" style="right:1261.60px;top:368.91px;font-size:14.4px;color:#c7d0d9;font-weight:normal;">0</div>
<div class="t" style="right:1261.60px;top:307.34px;font-size:14.4px;color:#c7d0d9;font-weight:normal;">0.200</div>
<div class="t" style="right:1261.60px;top:245.76px;font-size:14.4px;color:#c7d0d9;font-weight:normal;">0.400</div>
<div class="t" style="right:1261.60px;top:184.19px;font-size:14.4px;color:#c7d0d9;font-weight:normal;">0.600</div>
<div class="t" style="right:1261.60px;top:122.61px;font-size:14.4px;color:#c7d0d9;font-weight:normal;">0.800</div>
<div class="t" style="left:237.30px;transform:translateX(-50%);top:386.51px;font-size:14.4px;color:#c7d0d9;font-weight:normal;">09:50</div>
<div class="t" style="left:329.80px;transform:translateX(-50%);top:386.51px;font-size:14.4px;color:#c7d0d9;font-weight:normal;">09:55</div>
<div class="t" style="left:422.30px;transform:translateX(-50%);top:386.51px;font-size:14.4px;color:#c7d0d9;font-weight:normal;">10:00</div>
<div class="t" style="left:514.70px;transform:translateX(-50%);top:386.51px;font-size:14.4px;color:#c7d0d9;font-weight:normal;">10:05</div>
<div class="t" style="left:607.20px;transform:translateX(-50%);top:386.51px;font-size:14.4px;color:#c7d0d9;font-weight:normal;">10:10</div>
<div class="t" style="left:699.70px;transform:translateX(-50%);top:386.51px;font-size:14.4px;color:#c7d0d9;font-weight:normal;">10:15</div>
<div class="sw" style="left:116.8px;top:422.9px;background:#7EB26D"></div>
<div class="t" style="left:143.80px;top:416.03px;font-size:15.2px;color:#c7d0d9;font-weight:normal;">n01.cluster.local</div>
<div class="sw" style="left:265.9px;top:422.9px;background:#EAB839"></div>
<div class="t" style="left:292.90px;top:416.03px;font-size:15.2px;color:#c7d0d9;font-weight:normal;">n02.cluster.local</div>
<div class="sw" style="left:415.3px;top:422.9px;background:#6ED0E0"></div>
<div class="t" style="left:442.30px;top:416.03px;font-size:15.2px;color:#c7d0d9;font-weight:normal;">n03.cluster.local</div>
<div class="sw" style="left:565.1px;top:422.9px;background:#EF843C"></div>
<div class="t" style="left:592.10px;top:416.03px;font-size:15.2px;color:#c7d0d9;font-weight:normal;">n04.cluster.local</div>
<div class="sw" style="left:116.8px;top:445.4px;background:#E24D42"></div>
<div class="t" style="left:143.80px;top:438.53px;font-size:15.2px;color:#c7d0d9;font-weight:normal;">n05.cluster.local</div>
<div class="sw" style="left:265.9px;top:445.4px;background:#1F78C1"></div>
<div class="t" style="left:292.90px;top:438.53px;font-size:15.2px;color:#c7d0d9;font-weight:normal;">n06.cluster.local</div>
<div class="sw" style="left:415.3px;top:445.4px;background:#BA43A9"></div>
<div class="t" style="left:442.30px;top:438.53px;font-size:15.2px;color:#c7d0d9;font-weight:normal;">n07.cluster.local</div>
<div class="sw" style="left:565.1px;top:445.4px;background:#705DA0"></div>
<div class="t" style="left:592.10px;top:438.53px;font-size:15.2px;color:#c7d0d9;font-weight:normal;">n08.cluster.local</div>
<div class="sw" style="left:116.8px;top:467.9px;background:#508642"></div>
<div class="t" style="left:143.80px;top:461.03px;font-size:15.2px;color:#c7d0d9;font-weight:normal;">n09.cluster.local</div>
<div class="sw" style="left:265.9px;top:467.9px;background:#CCA300"></div>
<div class="t" style="left:292.90px;top:461.03px;font-size:15.2px;color:#c7d0d9;font-weight:normal;">n10.cluster.local</div>
<svg style="position:absolute;left:0;top:0" width="1404" height="895">
<line x1="790" x2="1355.5" y1="422.60" y2="422.60" stroke="rgba(255,255,255,0.155)" stroke-width="1.3"/>
<line x1="790" x2="1355.5" y1="364.46" y2="364.46" stroke="rgba(255,255,255,0.155)" stroke-width="1.3"/>
<line x1="790" x2="1355.5" y1="306.32" y2="306.32" stroke="rgba(255,255,255,0.155)" stroke-width="1.3"/>
<line x1="790" x2="1355.5" y1="248.18" y2="248.18" stroke="rgba(255,255,255,0.155)" stroke-width="1.3"/>
<line x1="790" x2="1355.5" y1="190.04" y2="190.04" stroke="rgba(255,255,255,0.155)" stroke-width="1.3"/>
<line x1="790" x2="1355.5" y1="131.90" y2="131.90" stroke="rgba(255,255,255,0.155)" stroke-width="1.3"/>
<line x1="879.6" x2="879.6" y1="131.9" y2="422.6" stroke="rgba(255,255,255,0.155)" stroke-width="1.3"/>
<line x1="974.0" x2="974.0" y1="131.9" y2="422.6" stroke="rgba(255,255,255,0.155)" stroke-width="1.3"/>
<line x1="1068.4" x2="1068.4" y1="131.9" y2="422.6" stroke="rgba(255,255,255,0.155)" stroke-width="1.3"/>
<line x1="1162.7" x2="1162.7" y1="131.9" y2="422.6" stroke="rgba(255,255,255,0.155)" stroke-width="1.3"/>
<line x1="1257.1" x2="1257.1" y1="131.9" y2="422.6" stroke="rgba(255,255,255,0.155)" stroke-width="1.3"/>
<line x1="1351.5" x2="1351.5" y1="131.9" y2="422.6" stroke="rgba(255,255,255,0.155)" stroke-width="1.3"/>
<rect x="792.2" y="185.16" width="562.00" height="237.44" fill="#7EB26D" fill-opacity="0.1"/>
<rect x="792.2" y="252.60" width="562.00" height="170.00" fill="#EAB839" fill-opacity="0.1"/>
<rect x="792.2" y="376.09" width="562.00" height="46.51" fill="#6ED0E0" fill-opacity="0.1"/>
<line x1="792.2" x2="1354.2" y1="185.16" y2="185.16" stroke="#7EB26D" stroke-width="1.8" stroke-opacity="0.8"/>
<polyline points="792.2,252.60 1175.5,252.60 1178.2,251.00 1180.4,252.20 1250,252.60 1354.2,252.90" fill="none" stroke="#EAB839" stroke-width="1.9" stroke-opacity="0.72"/>
<line x1="792.2" x2="1354.2" y1="376.09" y2="376.09" stroke="#6ED0E0" stroke-width="1.8" stroke-opacity="0.8"/>
</svg>
<div class="t" style="right:619.60px;top:413.81px;font-size:14.4px;color:#c7d0d9;font-weight:normal;">0%</div>
<div class="t" style="right:619.60px;top:355.67px;font-size:14.4px;color:#c7d0d9;font-weight:normal;">5%</div>
<div class="t" style="right:619.60px;top:297.53px;font-size:14.4px;color:#c7d0d9;font-weight:normal;">10%</div>
<div class="t" style="right:619.60px;top:239.39px;font-size:14.4px;color:#c7d0d9;font-weight:normal;">15%</div>
<div class="t" style="right:619.60px;top:181.25px;font-size:14.4px;color:#c7d0d9;font-weight:normal;">20%</div>
<div class="t" style="right:619.60px;top:123.11px;font-size:14.4px;color:#c7d0d9;font-weight:normal;">25%</div>
<div class="t" style="left:879.60px;transform:translateX(-50%);top:431.91px;font-size:14.4px;color:#c7d0d9;font-weight:normal;">09:50</div>
<div class="t" style="left:974.00px;transform:translateX(-50%);top:431.91px;font-size:14.4px;color:#c7d0d9;font-weight:normal;">09:55</div>
<div class="t" style="left:1068.40px;transform:translateX(-50%);top:431.91px;font-size:14.4px;color:#c7d0d9;font-weight:normal;">10:00</div>
<div class="t" style="left:1162.70px;transform:translateX(-50%);top:431.91px;font-size:14.4px;color:#c7d0d9;font-weight:normal;">10:05</div>
<div class="t" style="left:1257.10px;transform:translateX(-50%);top:431.91px;font-size:14.4px;color:#c7d0d9;font-weight:normal;">10:10</div>
<div class="t" style="left:1351.50px;transform:translateX(-50%);top:431.91px;font-size:14.4px;color:#c7d0d9;font-weight:normal;">10:15</div>
<div class="sw" style="left:767.7px;top:467.9px;background:#7EB26D"></div>
<div class="t" style="left:795.30px;top:461.03px;font-size:15.2px;color:#c7d0d9;font-weight:normal;">/boot</div>
<div class="sw" style="left:844.1px;top:467.9px;background:#EAB839"></div>
<div class="t" style="left:871.70px;top:461.03px;font-size:15.2px;color:#c7d0d9;font-weight:normal;">/</div>
<div class="sw" style="left:890.8px;top:467.9px;background:#6ED0E0"></div>
<div class="t" style="left:918.40px;top:461.03px;font-size:15.2px;color:#c7d0d9;font-weight:normal;">/home</div>
</body></html>
